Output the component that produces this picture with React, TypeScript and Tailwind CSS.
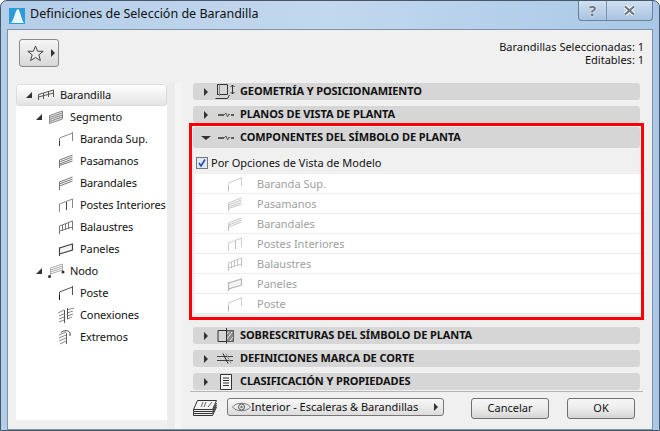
import React from 'react';

const Svg: React.FC<{ w?: number; h?: number; children: React.ReactNode; className?: string }> = ({ w = 16, h = 16, children, className }) => (
    <svg width={w} height={h} viewBox={`0 0 ${w} ${h}`} fill="none" className={`shrink-0 ${className ?? ''}`}>
        {children}
    </svg>
);

const RailIcon: React.FC<{ c?: string }> = ({ c = '#555' }) => (
    <Svg>
        <path d="M0.5 13V7.5L15.5 3V10M0.5 10L15.5 6M5.5 12V6M10.5 10V4.5" stroke={c} />
    </Svg>
);
const SegmentIcon: React.FC<{ c?: string }> = ({ c = '#8a8a8a' }) => (
    <Svg>
        <path d="M1.5 6.5L14.5 2V10L1.5 14.5Z" fill="#e4e4e4" stroke={c} />
        <path d="M1.5 8.5L14.5 4M1.5 10.5L14.5 6M1.5 12.5L14.5 8" stroke={c} />
    </Svg>
);
const TopRailIcon: React.FC<{ c?: string; post?: string }> = ({ c = '#888', post = '#333' }) => (
    <Svg>
        <path d="M1.5 15V7L14.5 2" stroke={c} />
        <path d="M1.5 15V10" stroke={post} />
        <path d="M14.5 1V10" stroke={c} />
    </Svg>
);
const HandrailIcon: React.FC<{ c?: string; wide?: boolean }> = ({ c = '#777', wide }) => (
    <Svg>
        <path d="M1.5 15V7" stroke={c} />
        <path d="M1.5 7L14.5 2M1.5 9L14.5 4M1.5 11L14.5 6" stroke={c} />
        {wide && <path d="M1.5 12.5L14.5 8" stroke={c} />}
    </Svg>
);
const InnerPostIcon: React.FC<{ c?: string; post?: string }> = ({ c = '#888', post = '#444' }) => (
    <Svg>
        <path d="M1.5 15V7L14.5 2V11" stroke={c} />
        <path d="M8.5 5V13" stroke={post} />
    </Svg>
);
const BalusterIcon: React.FC<{ c?: string }> = ({ c = '#777' }) => (
    <Svg>
        <path d="M1.5 15V7L14.5 2V11M1.5 12L14.5 8M4.5 6V12M7.5 5V11M10.5 4V10" stroke={c} />
    </Svg>
);
const PanelIcon: React.FC<{ c?: string }> = ({ c = '#444' }) => (
    <Svg>
        <path d="M1.5 15V7L14.5 3V9L1.5 13" stroke={c} strokeWidth="1.2" fill="#f4f4f4" />
    </Svg>
);
const NodeIcon = () => (
    <Svg w={18} h={16}>
        <path d="M3.5 13V5L15.5 1V9M3.5 7L15.5 3M3.5 9L15.5 5M3.5 11L15.5 7" stroke="#aaa" />
        <circle cx="2.5" cy="13.5" r="1.5" fill="#333" />
        <circle cx="16" cy="9" r="1.5" fill="#333" />
    </Svg>
);
const ConnectIcon = () => (
    <Svg>
        <path d="M0 6L6 3M1 9L6 7M1 12L6 10M1 15L6 13M9 3L16 1M9 6L15 4M9 9L15 7M9 12L14 10" stroke="#888" />
        <path d="M6.5 3V16M9.5 1V12" stroke="#555" />
    </Svg>
);
const EndIcon = () => (
    <Svg>
        <path d="M1 6L8 3M1 9L8 6M1 12L8 9M2 15L8 12" stroke="#888" />
        <path d="M3 3.5C6 1 11 1 12 4V7" stroke="#444" />
        <path d="M8.5 4V15" stroke="#666" />
    </Svg>
);
const GeometryIcon = () => (
    <Svg w={22} h={17}>
        <path d="M2.5 1.5H12.5V11.5H2.5ZM2.5 1.5V11.5M0.5 15.5H12.5L14.5 12" stroke="#333" />
        <path d="M4.5 1.5V13" stroke="#888" />
        <path d="M17.5 2V11M15.5 4L17.5 2L19.5 4M15.5 9L17.5 11L19.5 9" stroke="#333" />
    </Svg>
);
const PlanIcon = () => (
    <Svg w={17} h={8}>
        <path d="M0 4H6M13 4H16" stroke="#333" strokeWidth="1.4" />
        <path d="M6 4L8 2L9.5 6L11 3L12 4" stroke="#555" />
    </Svg>
);
const OverrideIcon = () => (
    <Svg w={18} h={17}>
        <path d="M1 3.5H16.5V14.5H1Z" stroke="#333" />
        <path d="M9 3.5H16.5V14.5H9Z" fill="#888" />
        <path d="M10 12L15 5M9 8L12 4.5M13 14L16 10" stroke="#eee" />
        <path d="M9.5 1V16.5" stroke="#333" />
    </Svg>
);
const CutIcon = () => (
    <Svg w={18} h={11}>
        <path d="M0 3.5H16M0 7.5H16" stroke="#444" />
        <path d="M6 0.5L11 10.5" stroke="#222" />
        <path d="M9 0.5L14 10.5" stroke="#888" />
    </Svg>
);
const ListIcon = () => (
    <Svg w={12} h={16}>
        <path d="M0.5 0.5H11.5V15.5H0.5Z" stroke="#333" fill="#f4f4f4" />
        <path d="M3 4H9M3 6.5H9M3 9H9M3 11.5H9" stroke="#333" />
    </Svg>
);
const LayersIcon = () => (
    <Svg w={26} h={16}>
        <path d="M5.5 0.5H24.5L20.5 9.5H1.5Z" fill="#f4f4f4" stroke="#333" />
        <path d="M1.5 9.5V11.5H20.5L24.5 3M1.5 11.5V13.5H20.5L24.5 5M1.5 13.5V15.5H20.5L24.5 7" stroke="#333" />
        <path d="M9 7L11 2M12 7L14 2M16 7L20 2" stroke="#666" />
    </Svg>
);
const EyeIcon = () => (
    <Svg w={19} h={12}>
        <path d="M0.5 6C4 1 14.5 1 18.5 6C14.5 11 4 11 0.5 6Z" stroke="#777" />
        <circle cx="9.5" cy="6" r="3" stroke="#555" />
        <circle cx="9.5" cy="6" r="1.2" fill="#777" />
    </Svg>
);
const StarIcon = () => (
    <svg width="17" height="17" viewBox="0 0 17 17" fill="none" className="shrink-0">
        <path d="M8.5 1L10.6 6.3H16.2L11.8 9.8L13.4 15.6L8.5 12.4L3.6 15.6L5.2 9.8L0.8 6.3H6.4Z" stroke="#444" fill="#eee" />
    </svg>
);

const ArrowRight = () => <span className="inline-block h-0 w-0 shrink-0 border-y-[4px] border-l-[4px] border-y-transparent border-l-[#333]" />;
const ArrowDown = () => <span className="h-0 w-0 shrink-0 border-x-[5px] border-t-[4px] border-x-transparent border-t-[#333]" />;
const TreeArrow = () => <span className="h-0 w-0 shrink-0 border-b-[6px] border-l-[6px] border-b-[#333] border-l-transparent" />;

const TreeRow: React.FC<{ level: number; label: string; icon: React.ReactNode; selected?: boolean; parent?: boolean }> = ({ level, label, icon, selected, parent }) => (
    <div
        className={`flex h-[22px] items-center text-[11px] tracking-[-0.1px] text-[#111] ${selected ? 'rounded-[3px] border border-[#dcdcdc] bg-gradient-to-b from-white to-[#e4e4e4]' : ''}`}
    >
        <div className={`flex items-center ${level === 0 ? 'pl-[9px]' : level === 1 ? 'pl-[20px]' : 'pl-[39px]'}`}>
            {parent && <TreeArrow />}
            <span className={`flex w-[22px] justify-center ${parent ? 'ml-[3px]' : ''}`}>{icon}</span>
        </div>
        <span className="ml-[3px] whitespace-nowrap">{label}</span>
    </div>
);

const Section: React.FC<{ label: string; icon: React.ReactNode; open?: boolean; className?: string }> = ({ label, icon, open, className }) => (
    <div className={`flex items-center rounded-[3px] bg-[#d6d6d6] pl-[8px] text-[11px] font-bold tracking-[-0.1px] text-[#111] ${className ?? 'h-[17px]'}`}>
        <span className="flex w-[10px] justify-center">{open ? <ArrowDown /> : <ArrowRight />}</span>
        <span className="flex w-[25px] justify-center pl-[5px]">{icon}</span>
        <span className="ml-[4px] whitespace-nowrap">{label}</span>
    </div>
);

const DisabledRow: React.FC<{ label: string; icon: React.ReactNode }> = ({ label, icon }) => (
    <div className="flex h-[20px] items-center border-b border-[#ececec] bg-white pl-[32px] text-[11px] text-[#a0a0a0]">
        <span className="flex w-[16px] justify-center">{icon}</span>
        <span className="ml-[14px] pt-[1px]">{label}</span>
    </div>
);

const PushButton: React.FC<{ label: string; className: string }> = ({ label, className }) => (
    <button className={`h-[21px] rounded-[3px] border border-[#6f6f6f] bg-gradient-to-b from-[#f6f6f6] via-[#ededed] to-[#d4d4d4] text-[11px] text-[#111] ${className}`}>
        {label}
    </button>
);

const App: React.FC = () => {
    return (
        <div
            className="flex h-[431px] w-[660px] flex-col overflow-hidden rounded-t-[7px] border border-[#46576a] bg-gradient-to-r from-[#b4cde8] via-[#c2d8ee] to-[#a9c8e8] px-[6px]"
            style={{ fontFamily: '"Noto Sans", Tahoma, sans-serif' }}
        >
            <div className="flex h-[28px] shrink-0 items-start">
                <svg width="16" height="16" viewBox="0 0 16 16" className="ml-[2px] mt-[7px] shrink-0">
                    <rect width="16" height="16" fill="#2a9ad8" />
                    <path d="M1 15C5 15 6 1 9 1C11 1 12 11 15 15Z" fill="#e8f6fd" />
                </svg>
                <span className="ml-[5px] mt-[4px] whitespace-nowrap text-[12.5px] text-[#111]">Definiciones de Selección de Barandilla</span>
                <div className="ml-auto flex h-[20px] w-[75px] rounded-b-[4px] border border-t-0 border-[#6d8198] bg-gradient-to-b from-[#d0e0f1] to-[#a8c4e0]">
                    <span className="flex w-[28px] items-center justify-center border-r border-[#7d92a9] text-[15px] font-bold leading-none text-[#777] [text-shadow:0_0_2px_#fff]">?</span>
                    <span className="flex flex-1 items-center justify-center">
                        <svg width="13" height="11" viewBox="0 0 13 11" fill="none">
                            <path d="M2 1.5L11 9.5M11 1.5L2 9.5" stroke="#fff" strokeWidth="4" />
                            <path d="M2 1.5L11 9.5M11 1.5L2 9.5" stroke="#6d7580" strokeWidth="2.2" />
                        </svg>
                    </span>
                </div>
            </div>

            <div className="flex h-[401px] shrink-0 flex-col border border-[#7f93a8] bg-[#f0f0f0]">
                <div className="flex h-[53px] shrink-0 items-start justify-between pl-[11px] pr-[8px] pt-[9px]">
                    <button className="flex h-[28px] w-[40px] items-center gap-[7px] rounded-[3px] border border-[#8a8a8a] bg-gradient-to-b from-[#f6f6f6] to-[#d8d8d8] pl-[7px]">
                        <StarIcon />
                        <ArrowRight />
                    </button>
                    <div className="pt-[1px] text-right text-[11px] leading-[13px] text-[#111]">
                        <div>Barandillas Seleccionadas: 1</div>
                        <div>Editables: 1</div>
                    </div>
                </div>

                <div className="flex min-h-0 flex-1">
                    <div className="mb-[9px] ml-[8px] mt-[1px] w-[151px] shrink-0 bg-white">
                        <TreeRow level={0} label="Barandilla" selected parent icon={<RailIcon />} />
                        <TreeRow level={1} label="Segmento" parent icon={<SegmentIcon />} />
                        <TreeRow level={2} label="Baranda Sup." icon={<TopRailIcon />} />
                        <TreeRow level={2} label="Pasamanos" icon={<HandrailIcon wide />} />
                        <TreeRow level={2} label="Barandales" icon={<HandrailIcon />} />
                        <TreeRow level={2} label="Postes Interiores" icon={<InnerPostIcon />} />
                        <TreeRow level={2} label="Balaustres" icon={<BalusterIcon />} />
                        <TreeRow level={2} label="Paneles" icon={<PanelIcon />} />
                        <TreeRow level={1} label="Nodo" parent icon={<NodeIcon />} />
                        <TreeRow level={2} label="Poste" icon={<TopRailIcon c="#555" post="#111" />} />
                        <TreeRow level={2} label="Conexiones" icon={<ConnectIcon />} />
                        <TreeRow level={2} label="Extremos" icon={<EndIcon />} />
                    </div>
                    <div className="w-[8px] shrink-0 bg-[#ececec]" />
                    <div className="w-[6px] shrink-0 bg-[#f5f5f5]" />

                    <div className="flex min-w-0 flex-1 flex-col pr-[8px]">
                        <div className="flex flex-col gap-[6px] pl-[12px] pr-[4px]">
                            <Section label="GEOMETRÍA Y POSICIONAMIENTO" icon={<GeometryIcon />} />
                            <Section label="PLANOS DE VISTA DE PLANTA" icon={<PlanIcon />} />
                        </div>
                        <div className="ml-[8px] h-[197px] shrink-0 border-[3px] border-[#ff0000] bg-[#f0f0f0]">
                            <Section label="COMPONENTES DEL SÍMBOLO DE PLANTA" open icon={<PlanIcon />} className="mx-[1px] mt-[1px] h-[21px]" />
                            <div className="flex h-[26px] items-center gap-[3px] pl-[4px] pt-[4px] text-[11px] text-[#111]">
                                <span className="flex h-[12px] w-[12px] items-center justify-center border border-[#777] bg-[#dfe8f8]">
                                    <svg width="10" height="10" viewBox="0 0 10 10" fill="none">
                                        <path d="M2 5L4 8L8 1.5" stroke="#2a4fa0" strokeWidth="1.6" />
                                    </svg>
                                </span>
                                Por Opciones de Vista de Modelo
                            </div>
                            <div className="ml-[3px]">
                                <DisabledRow label="Baranda Sup." icon={<TopRailIcon c="#ccc" post="#bbb" />} />
                                <DisabledRow label="Pasamanos" icon={<HandrailIcon c="#c4c4c4" wide />} />
                                <DisabledRow label="Barandales" icon={<HandrailIcon c="#c4c4c4" />} />
                                <DisabledRow label="Postes Interiores" icon={<InnerPostIcon c="#ccc" post="#bbb" />} />
                                <DisabledRow label="Balaustres" icon={<BalusterIcon c="#c4c4c4" />} />
                                <DisabledRow label="Paneles" icon={<PanelIcon c="#b4b4b4" />} />
                                <DisabledRow label="Poste" icon={<TopRailIcon c="#ccc" post="#aaa" />} />
                            </div>
                        </div>
                        <div className="mt-[7px] flex flex-col gap-[6px] pl-[12px] pr-[4px]">
                            <Section label="SOBRESCRITURAS DEL SÍMBOLO DE PLANTA" icon={<OverrideIcon />} />
                            <Section label="DEFINICIONES MARCA DE CORTE" icon={<CutIcon />} />
                            <Section label="CLASIFICACIÓN Y PROPIEDADES" icon={<ListIcon />} />
                        </div>
                        <div className="ml-[9px] mr-[1px] mt-[1px] flex flex-1 items-start border-t border-[#b4b4b4] pt-[6px]">
                            <span className="ml-[2px] mt-[2px]"><LayersIcon /></span>
                            <button className="ml-[9px] flex h-[18px] w-[217px] items-center rounded-[3px] border border-[#777] bg-gradient-to-b from-[#f8f8f8] to-[#dcdcdc] pl-[4px] pr-[5px] text-[11px] text-[#111]">
                                <EyeIcon />
                                <span className="whitespace-nowrap">Interior - Escaleras &amp; Barandillas</span>
                                <span className="ml-auto flex"><ArrowRight /></span>
                            </button>
                            <PushButton label="Cancelar" className="ml-[27px] w-[78px]" />
                            <PushButton label="OK" className="ml-[18px] w-[68px]" />
                        </div>
                    </div>
                </div>
            </div>
        </div>
    );
};

export default App;
